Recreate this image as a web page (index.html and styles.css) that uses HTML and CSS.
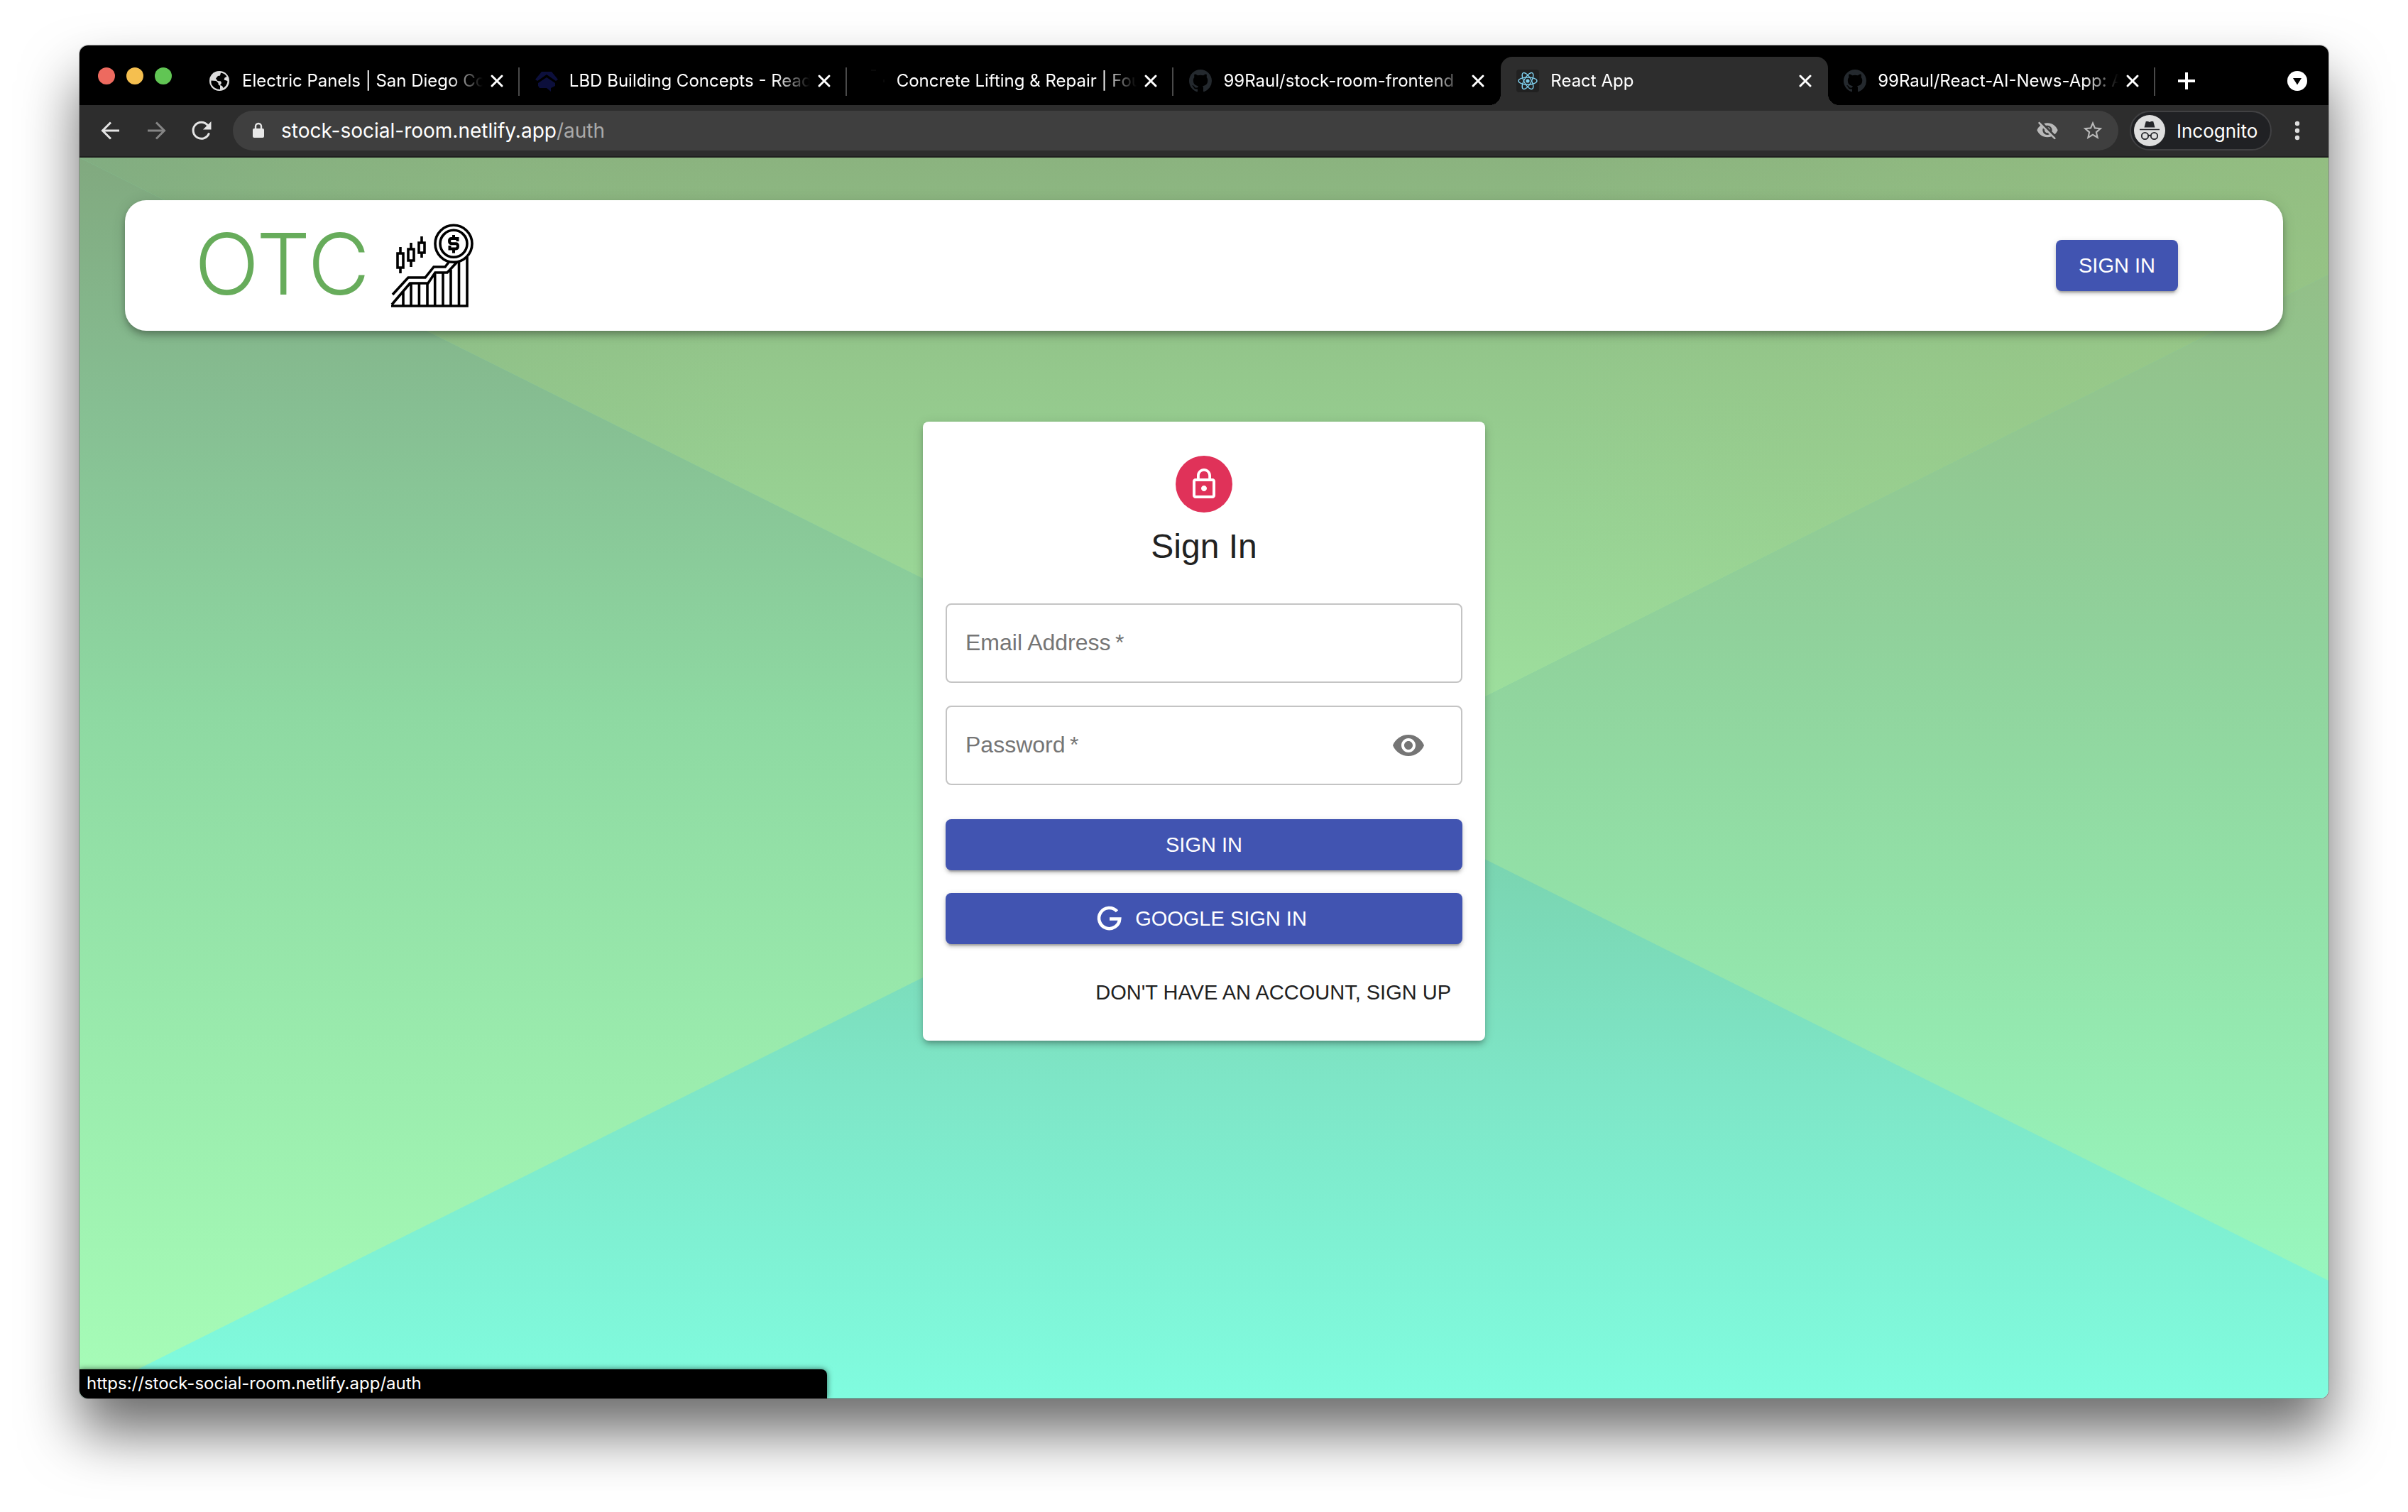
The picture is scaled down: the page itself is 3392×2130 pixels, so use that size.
FILE: index.html
```html
<!DOCTYPE html>
<html lang="en">
<head>
<meta charset="utf-8">
<title>React App</title>
<link rel="stylesheet" href="styles.css">
</head>
<body>
<svg class="defs" aria-hidden="true">
  <symbol id="close" viewBox="0 0 24 24"><path d="M5 5l14 14M19 5L5 19" fill="none" stroke="#fff" stroke-width="3" stroke-linecap="round"/></symbol>
  <symbol id="github" viewBox="0 0 16 16"><path fill="#24292e" d="M8 0C3.58 0 0 3.58 0 8c0 3.54 2.29 6.53 5.47 7.59.4.07.55-.17.55-.38 0-.19-.01-.82-.01-1.49-2.01.37-2.53-.49-2.69-.94-.09-.23-.48-.94-.82-1.13-.28-.15-.68-.52-.01-.53.63-.01 1.08.58 1.23.82.72 1.21 1.87.87 2.33.66.07-.52.28-.87.51-1.07-1.78-.2-3.64-.89-3.64-3.95 0-.87.31-1.59.82-2.15-.08-.2-.36-1.02.08-2.12 0 0 .67-.21 2.2.82.64-.18 1.32-.27 2-.27s1.36.09 2 .27c1.53-1.04 2.2-.82 2.2-.82.44 1.1.16 1.92.08 2.12.51.56.82 1.27.82 2.15 0 3.07-1.87 3.75-3.65 3.95.29.25.54.73.54 1.48 0 1.07-.01 1.93-.01 2.2 0 .21.15.46.55.38A8.01 8.01 0 0 0 16 8c0-4.42-3.58-8-8-8z"/></symbol>
</svg>
<div class="window">
  <div class="tabstrip">
    <div class="lights"><span class="light red"></span><span class="light yellow"></span><span class="light green"></span></div>
    <div class="tabs">
      <div class="tab">
        <svg class="favicon" viewBox="0 0 32 32"><circle cx="16" cy="16" r="14" fill="#dcdcdc"/><path fill="#000" d="M4.500 15.500l7 .5 3 3v2l2.500 2v5q-8-.3-12-7-1-3-.5-5.500zM18 4.500q6 .8 8.500 5.500l-3 1.500-1 3 3.500 1 1.500 1q-.5 6-6 9.500l-1.500-3-3-1 2-3-1-2.500-4.500-.5-2.500-3.500 3-3.500 3-.5z"/></svg>
        <span class="title">Electric Panels | San Diego County</span>
        <button class="close" aria-label="Close tab"><svg viewBox="0 0 24 24"><use href="#close"/></svg></button>
      </div>
      <div class="tab">
        <svg class="favicon" viewBox="0 0 32 32"><path fill="#0c0f3c" d="M9 3h14l9 11-3 2L16 7 3 16l-3-2zM16 11l12 8v4l-6 3v5l-6-5H6l-2-3v-4z"/></svg>
        <span class="title">LBD Building Concepts - Ready to</span>
        <button class="close" aria-label="Close tab"><svg viewBox="0 0 24 24"><use href="#close"/></svg></button>
      </div>
      <div class="tab">
        <svg class="favicon" viewBox="0 0 32 32"><path d="M12 1h7M30 14v4" stroke="#141414" stroke-width="1"/></svg>
        <span class="title">Concrete Lifting &amp; Repair | Foundation</span>
        <button class="close" aria-label="Close tab"><svg viewBox="0 0 24 24"><use href="#close"/></svg></button>
      </div>
      <div class="tab last-before">
        <svg class="favicon" viewBox="0 0 32 32"><use href="#github"/></svg>
        <span class="title">99Raul/stock-room-frontend</span>
        <button class="close" aria-label="Close tab"><svg viewBox="0 0 24 24"><use href="#close"/></svg></button>
      </div>
      <div class="tab active">
        <svg class="favicon" viewBox="0 0 32 32"><rect width="32" height="32" rx="4" fill="#212121"/><g fill="none" stroke="#7fd0ee" stroke-width="1.4"><ellipse cx="16" cy="16" rx="13" ry="5"/><ellipse cx="16" cy="16" rx="13" ry="5" transform="rotate(60 16 16)"/><ellipse cx="16" cy="16" rx="13" ry="5" transform="rotate(120 16 16)"/></g><circle cx="16" cy="16" r="2.6" fill="#7fd0ee"/></svg>
        <span class="title">React App</span>
        <button class="close" aria-label="Close tab"><svg viewBox="0 0 24 24"><use href="#close"/></svg></button>
      </div>
      <div class="tab">
        <svg class="favicon" viewBox="0 0 32 32"><use href="#github"/></svg>
        <span class="title">99Raul/React-AI-News-App: A React</span>
        <button class="close" aria-label="Close tab"><svg viewBox="0 0 24 24"><use href="#close"/></svg></button>
      </div>
    </div>
    <div class="tab-actions">
      <button class="icon-button" aria-label="New tab"><svg viewBox="0 0 28 28"><path d="M14 2v24M2 14h24" stroke="#fff" stroke-width="4"/></svg></button>
      <button class="icon-button" aria-label="Search tabs"><svg viewBox="0 0 28 28"><circle cx="14" cy="14" r="14" fill="#fff"/><path d="M8 10h12l-6 9.500z" fill="#000"/></svg></button>
    </div>
  </div>
  <div class="toolbar">
    <div class="nav">
      <button class="nav-button" aria-label="Back"><svg viewBox="0 0 32 32"><path d="M28 16H5M16 4.500L4.500 16 16 27.500" fill="none" stroke="#e4e4e4" stroke-width="3"/></svg></button>
      <button class="nav-button" aria-label="Forward"><svg viewBox="0 0 32 32"><path d="M4 16h23M16 4.500L27.500 16 16 27.500" fill="none" stroke="#858585" stroke-width="3"/></svg></button>
      <button class="nav-button" aria-label="Reload"><svg viewBox="0 0 32 32"><path d="M26.500 19.500A11.500 11.500 0 1 1 24.500 8.500" fill="none" stroke="#e4e4e4" stroke-width="3"/><path d="M29.500 3v11.500H18z" fill="#e4e4e4"/></svg></button>
    </div>
    <div class="omnibox">
      <svg class="lock" viewBox="0 0 20 24"><rect x="2" y="9" width="16" height="13" rx="2" fill="#e8e8e8"/><path d="M6 10V6a4 4 0 0 1 8 0v4" fill="none" stroke="#e8e8e8" stroke-width="2.400"/></svg>
      <span class="url">stock-social-room.netlify.app<span class="path">/auth</span></span>
      <svg class="omni-icon" viewBox="0 0 24 24"><path fill="#b9b9b9" d="M12 6.500c2.760 0 5 2.240 5 5 0 .51-.1 1-.24 1.460l3.060 3.060c1.390-1.230 2.490-2.770 3.180-4.530C21.270 7.110 17 4 12 4c-1.270 0-2.490.2-3.640.57l2.170 2.170c.47-.14.96-.24 1.470-.24zM2.710 3.160a.996.996 0 0 0 0 1.410l1.970 1.970A11.892 11.892 0 0 0 1 11.500C2.730 15.890 7 19 12 19c1.520 0 2.970-.3 4.310-.82l2.720 2.720a.996.996 0 1 0 1.410-1.410L4.130 3.160c-.39-.39-1.030-.39-1.420 0zM12 16.500c-2.760 0-5-2.240-5-5 0-.77.180-1.500.49-2.140l1.570 1.570c-.03.18-.06.37-.06.570 0 1.660 1.340 3 3 3 .2 0 .38-.03.57-.07L14.140 16c-.65.32-1.370.5-2.140.5zm2.970-5.330a2.970 2.970 0 0 0-2.640-2.640l2.640 2.640z"/></svg>
      <svg class="omni-icon" viewBox="0 0 24 24"><path fill="#b9b9b9" d="M22 9.240l-7.190-.62L12 2 9.190 8.630 2 9.240l5.460 4.730L5.820 21 12 17.270 18.180 21l-1.630-7.030L22 9.240zM12 15.400l-3.760 2.270 1-4.280-3.320-2.880 4.380-.38L12 6.100l1.710 4.040 4.380.38-3.320 2.880 1 4.280L12 15.400z"/></svg>
    </div>
    <button class="profile">
      <svg viewBox="0 0 44 44"><circle cx="22" cy="22" r="22" fill="#dedede"/><path d="M14.500 17.500l2.300-8.500h3l2.200 1 2.200-1h3l2.300 8.500z" fill="#26272b"/><path d="M8 20.500h28" stroke="#26272b" stroke-width="1.600"/><g fill="none" stroke="#26272b" stroke-width="1.800"><circle cx="15.500" cy="29.500" r="4.700"/><circle cx="28.500" cy="29.500" r="4.700"/><path d="M20 29.500q2-1.500 4 0"/></g></svg>
      <span>Incognito</span>
    </button>
    <button class="icon-button" aria-label="Menu"><svg viewBox="0 0 28 28"><g fill="#dedede"><circle cx="14" cy="4" r="3.200"/><circle cx="14" cy="14" r="3.200"/><circle cx="14" cy="24" r="3.200"/></g></svg></button>
  </div>
  <div class="page">
    <svg class="backdrop" viewBox="0 0 3168 1748" preserveAspectRatio="none" aria-hidden="true">
      <defs>
        <linearGradient id="top" gradientUnits="userSpaceOnUse" x1="0" y1="0" x2="0" y2="874"><stop offset="0" stop-color="#8bb37f"/><stop offset=".35" stop-color="#94c88c"/><stop offset="1" stop-color="#9fe4a1"/></linearGradient>
        <linearGradient id="left" gradientUnits="userSpaceOnUse" x1="0" y1="0" x2="0" y2="1748"><stop offset="0" stop-color="#81a97f"/><stop offset=".2" stop-color="#86be92"/><stop offset=".45" stop-color="#8ed9a2"/><stop offset=".75" stop-color="#9bedae"/><stop offset="1" stop-color="#a7fdb8"/></linearGradient>
        <linearGradient id="right" gradientUnits="userSpaceOnUse" x1="0" y1="160" x2="0" y2="1600"><stop offset="0" stop-color="#93bf88"/><stop offset=".35" stop-color="#90d19b"/><stop offset=".6" stop-color="#92e0a7"/><stop offset="1" stop-color="#98f8bf"/></linearGradient>
        <linearGradient id="bottom" gradientUnits="userSpaceOnUse" x1="0" y1="874" x2="0" y2="1748"><stop offset="0" stop-color="#79cea9"/><stop offset=".5" stop-color="#7ee6c7"/><stop offset="1" stop-color="#80fcdf"/></linearGradient>
        <linearGradient id="warm" x1="0" y1="0" x2="1" y2="0"><stop offset="0" stop-color="#7ba882" stop-opacity=".6"/><stop offset=".3" stop-color="#8fbb83" stop-opacity="0"/><stop offset=".65" stop-color="#9bc884" stop-opacity="0"/><stop offset="1" stop-color="#9bc884" stop-opacity=".5"/></linearGradient>
      </defs>
      <rect width="3168" height="1748" fill="url(#bottom)"/>
      <path d="M0 0L1751 874 0 1748z" fill="url(#left)"/>
      <path d="M0 0L1751 874 3168 165V0H0z" fill="url(#top)"/>
      <path d="M0 0L1751 874 3168 165V0H0z" fill="url(#warm)"/>
      <path d="M3168 165L1751 874 3168 1582z" fill="url(#right)"/>
    </svg>
    <header class="appbar">
      <div class="brand">
        <h2 class="brand-name">OTC</h2>
        <svg class="brand-icon" viewBox="0 0 120 120" aria-hidden="true">
          <g fill="none" stroke="#000" stroke-width="3.600">
            <circle cx="90" cy="29.300" r="26"/><circle cx="90" cy="29.300" r="19"/>
            <path d="M15 34v7.500M15 64v7M11 43h8v20h-8zM30 28v8M30 54v8M26 37h8v16h-8zM45 19v8M45 43v6M41 28h8v14h-8z"/>
            <path d="M4 101L26 77H50L62 62H78L83 55.500"/>
            <path d="M3 115L28.500 85H54L64 70H81L95 55M2 117H109V48M19 97v20M30 86v30M41.400 85v31M53 85v31M63.700 72v45M75 70v47M86 66v50M97.500 54v63"/>
            <path d="M95.500 26v-4H87q-3 0-3 3.500t3 3.700h6q3 0 3 3.600T93 36.500h-8.500V32M90 17v5M90 37v5.500" stroke-width="4"/>
          </g>
        </svg>
      </div>
      <a class="button" href="/auth">SIGN IN</a>
    </header>
    <form class="card">
      <span class="avatar"><svg viewBox="0 0 24 24"><path fill="#fff" d="M12 17c1.100 0 2-.9 2-2s-.9-2-2-2-2 .9-2 2 .9 2 2 2zm6-9h-1V6c0-2.760-2.240-5-5-5S7 3.240 7 6v2H6c-1.100 0-2 .9-2 2v10c0 1.100.9 2 2 2h12c1.100 0 2-.9 2-2V10c0-1.100-.9-2-2-2zM8.900 6c0-1.710 1.390-3.100 3.100-3.100s3.100 1.390 3.100 3.100v2H8.900V6zM18 20H6V10h12v10z"/></svg></span>
      <h1 class="heading">Sign In</h1>
      <div class="fields">
        <div class="field">
          <label for="email">Email Address&#8201;*</label>
          <input id="email" type="email">
        </div>
        <div class="field">
          <label for="password">Password&#8201;*</label>
          <input id="password" type="password">
          <button type="button" class="reveal" aria-label="Show password"><svg viewBox="0 0 24 24"><path fill="#757575" d="M12 4.500C7 4.500 2.730 7.610 1 12c1.730 4.390 6 7.500 11 7.500s9.270-3.110 11-7.500c-1.730-4.390-6-7.500-11-7.500zM12 17c-2.760 0-5-2.240-5-5s2.240-5 5-5 5 2.240 5 5-2.240 5-5 5zm0-8c-1.660 0-3 1.340-3 3s1.340 3 3 3 3-1.340 3-3-1.340-3-3-3z"/></svg></button>
        </div>
      </div>
      <div class="actions">
        <button type="submit" class="button">SIGN IN</button>
        <button type="button" class="button"><svg class="google" viewBox="0 0 40 40"><path fill="none" stroke="#fff" stroke-width="4.600" d="M30.500 9.800A14.600 14.600 0 1 0 34.200 20.500H20"/></svg>GOOGLE SIGN IN</button>
      </div>
      <button type="button" class="switch">DON'T HAVE AN ACCOUNT, SIGN UP</button>
    </form>
    <div class="status">https://stock-social-room.netlify.app/auth</div>
  </div>
</div>
</body>
</html>
```
FILE: styles.css
```css
* { box-sizing: border-box; }

body {
  margin: 0;
  min-height: 100vh;
  padding: 64px 112px 160px;
  display: flex;
  background: #fff;
  font-family: "Liberation Sans", Arial, sans-serif;
}

h1, h2 { margin: 0; }
svg { display: block; }

button {
  border: 0;
  padding: 0;
  background: none;
  font: inherit;
  color: inherit;
  cursor: pointer;
}

.defs { position: absolute; width: 0; height: 0; }

/* browser window */
.window {
  flex: 1;
  min-width: 0;
  display: flex;
  flex-direction: column;
  border-radius: 12px;
  overflow: hidden;
  box-shadow: 0 0 0 1px rgba(0, 0, 0, .25), 0 48px 80px rgba(0, 0, 0, .58);
}

.tabstrip {
  display: flex;
  align-items: flex-end;
  height: 84px;
  background: #000;
  color: #fff;
  font-family: Inter, sans-serif;
  font-size: 24px;
}

.lights { display: flex; gap: 16px; width: 159px; padding: 0 0 29px 26px; }
.light { width: 24px; height: 24px; border-radius: 50%; }
.red { background: #ed6a5f; }
.yellow { background: #f5bf4f; }
.green { background: #61c554; }

.tabs { flex: 1; display: flex; min-width: 0; }

.tab {
  position: relative;
  flex: 1 1 0;
  min-width: 0;
  height: 68px;
  display: flex;
  align-items: center;
  padding: 0 20px 0 22px;
}

.tab::after {
  content: "";
  position: absolute;
  right: 0;
  top: 15px;
  width: 2px;
  height: 40px;
  background: #4a4a4a;
}

.last-before::after { display: none; }
.favicon { width: 32px; height: 32px; flex: none; }

.title {
  flex: 1;
  min-width: 0;
  margin: 0 8px 0 16px;
  overflow: hidden;
  white-space: nowrap;
  line-height: 32px;
  -webkit-mask-image: linear-gradient(to left, transparent, #000 48px);
  mask-image: linear-gradient(to left, transparent, #000 48px);
}

.close { width: 24px; height: 24px; flex: none; }
.close svg { width: 24px; height: 24px; }

.active {
  background: #2d2d2d;
  border-radius: 16px 16px 0 0;
}

.active::before, .active::after {
  content: "";
  position: absolute;
  top: auto;
  bottom: 0;
  width: 16px;
  height: 16px;
}

.active::before { left: -16px; background: radial-gradient(circle at 0 0, transparent 16px, #2d2d2d 16px); }
.active::after { right: -16px; background: radial-gradient(circle at 100% 0, transparent 16px, #2d2d2d 16px); }

.tab-actions {
  display: flex;
  justify-content: space-between;
  align-items: center;
  width: 244px;
  height: 68px;
  padding: 0 30px;
}

.icon-button, .icon-button svg { width: 28px; height: 28px; }

.toolbar {
  display: flex;
  align-items: center;
  gap: 16px;
  height: 74px;
  padding: 0 30px 0 28px;
  background: #2d2d2d;
  border-bottom: 2px solid #1e1e1e;
  color: #fff;
  font-family: Inter, sans-serif;
  font-size: 26px;
}

.nav { display: flex; gap: 32px; padding-right: 12px; }
.nav-button, .nav-button svg { width: 32px; height: 32px; }

.omnibox {
  flex: 1;
  display: flex;
  align-items: center;
  gap: 32px;
  height: 56px;
  padding: 0 20px 0 26px;
  border-radius: 28px;
  background: #3f3f3f;
}

.lock { width: 20px; height: 24px; }
.url { flex: 1; margin-left: -10px; font-size: 28px; }
.path { color: #a9a9a9; }
.omni-icon { width: 32px; height: 32px; }

.profile {
  display: flex;
  align-items: center;
  gap: 16px;
  width: 200px;
  height: 56px;
  padding: 0 4px;
  border: 2px solid #414143;
  border-radius: 28px;
  background: #202124;
}

.profile svg { width: 44px; height: 44px; }
.profile + .icon-button { margin-left: 6px; }

/* web page */
.page {
  position: relative;
  flex: 1;
  display: flex;
  flex-direction: column;
  padding: 60px 64px 0;
}

.backdrop {
  position: absolute;
  inset: 0;
  width: 100%;
  height: 100%;
}

.appbar {
  position: relative;
  display: flex;
  justify-content: space-between;
  align-items: center;
  height: 184px;
  padding: 0 148px 0 98px;
  border-radius: 30px;
  background: #fff;
  box-shadow: 0 4px 8px -2px rgba(0, 0, 0, .2), 0 8px 10px rgba(0, 0, 0, .14), 0 2px 20px rgba(0, 0, 0, .12);
}

.brand { display: flex; align-items: center; gap: 28px; }

.brand-name {
  padding-bottom: 4px;
  color: #67ac5b;
  font-family: Inter, sans-serif;
  font-size: 120px;
  font-weight: 300;
  line-height: 144px;
}

.brand-icon { width: 120px; height: 120px; }

.button {
  display: flex;
  justify-content: center;
  align-items: center;
  height: 72px;
  padding: 0 32px;
  border-radius: 8px;
  background: #4154b1;
  color: #fff;
  font-size: 29px;
  text-decoration: none;
  box-shadow: 0 6px 2px -4px rgba(0, 0, 0, .2), 0 4px 4px rgba(0, 0, 0, .14), 0 2px 10px rgba(0, 0, 0, .12);
}

.google { width: 40px; height: 40px; margin: 0 16px 0 -8px; }

.card {
  position: relative;
  align-self: center;
  display: flex;
  flex-direction: column;
  align-items: center;
  width: 792px;
  margin-top: 128px;
  padding: 48px 32px 32px;
  border-radius: 8px;
  background: #fff;
  color: #212121;
  box-shadow: 0 6px 6px -4px rgba(0, 0, 0, .2), 0 6px 8px rgba(0, 0, 0, .14), 0 2px 16px rgba(0, 0, 0, .12);
}

.avatar {
  display: flex;
  justify-content: center;
  align-items: center;
  width: 80px;
  height: 80px;
  border-radius: 50%;
  background: #e03259;
}

.avatar svg { width: 48px; height: 48px; }

.heading {
  margin-top: 16px;
  font-size: 48px;
  font-weight: 400;
  line-height: 64px;
}

.fields {
  display: grid;
  gap: 32px;
  width: 100%;
  margin-top: 48px;
}

.field {
  display: grid;
  grid-template-columns: 1fr auto;
  align-items: center;
  height: 112px;
  border: 2px solid #c4c4c4;
  border-radius: 8px;
}

.field label {
  grid-area: 1 / 1;
  padding: 0 0 2px 26px;
  color: #757575;
  font-size: 32px;
}

.field input {
  grid-area: 1 / 1;
  width: 100%;
  height: 100%;
  padding: 0 26px;
  border: 0;
  outline: 0;
  background: transparent;
  font: inherit;
  font-size: 32px;
}

.reveal { padding: 24px; margin-right: 26px; }
.reveal svg { width: 48px; height: 48px; }

.actions {
  display: grid;
  gap: 32px;
  width: 100%;
  margin-top: 48px;
}

.switch {
  align-self: flex-end;
  height: 72px;
  margin-top: 32px;
  padding: 0 16px;
  font-size: 29px;
}

.status {
  position: absolute;
  left: 0;
  bottom: 0;
  width: 1053px;
  padding: 4px 10px 5px;
  border-radius: 0 8px 0 0;
  background: #000;
  color: #fff;
  font-family: Inter, sans-serif;
  font-size: 24px;
  line-height: 32px;
  box-shadow: 0 0 8px rgba(0, 0, 0, .6);
}
```
